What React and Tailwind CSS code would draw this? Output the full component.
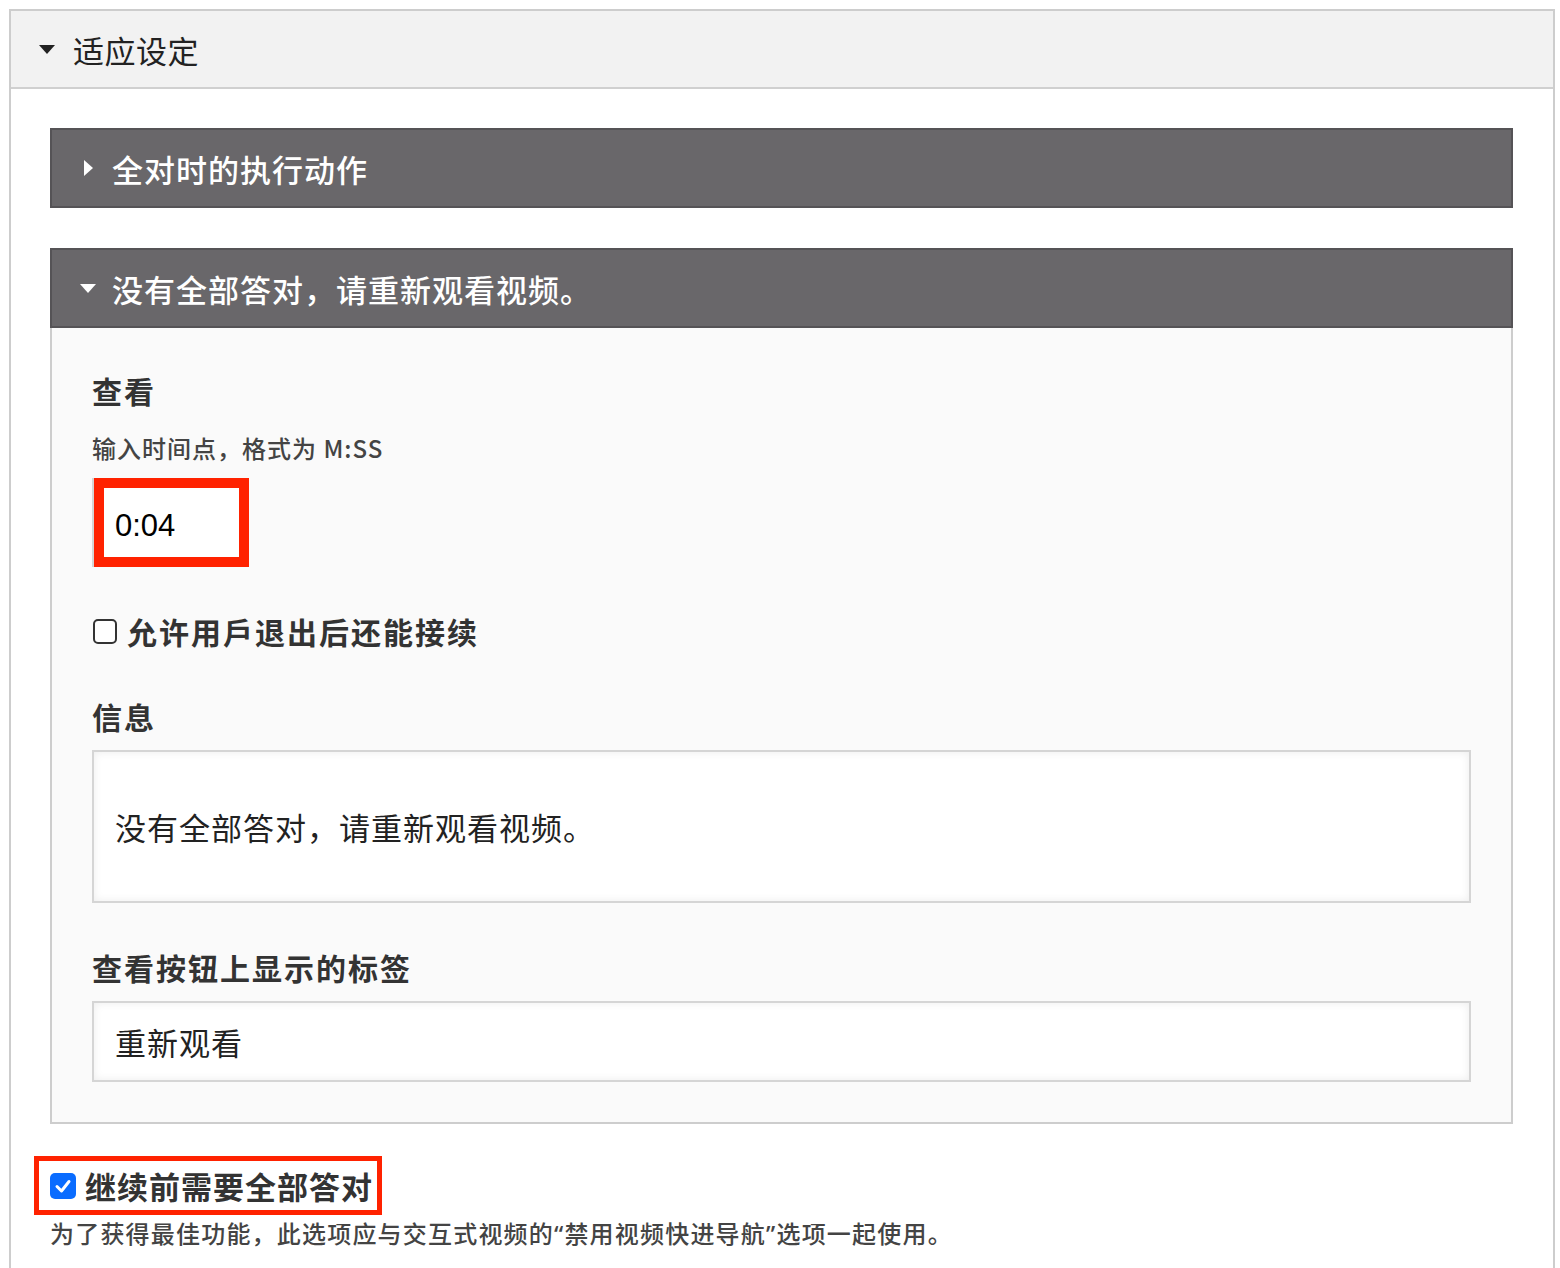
import React from 'react';

const cjk = { fontFamily: '"Noto Sans CJK SC", "Noto Sans", sans-serif' };

const Caret = ({ dir = 'down', color = '#222', className = '' }) =>
    dir === 'down' ? (
        <svg width="16" height="9" viewBox="0 0 16 9" className={className}>
            <polygon points="0,0 16,0 8,9" fill={color} />
        </svg>
    ) : (
        <svg width="9" height="16" viewBox="0 0 9 16" className={className}>
            <polygon points="0,0 9,8 0,16" fill={color} />
        </svg>
    );

const DarkHeader = ({ open, children }) => (
    <div className="flex items-center h-[80px] bg-[#69676a] border-2 border-[#555356] pl-[28px] gap-[16px]">
        {open ? (
            <Caret dir="down" color="#fff" />
        ) : (
            <Caret dir="right" color="#fff" className="ml-[4px] mr-[3px]" />
        )}
        <span className="text-[31px] font-medium text-white leading-none tracking-[1px]">{children}</span>
    </div>
);

const Label = ({ children, className = '' }) => (
    <div className={`text-[30px] font-bold text-[#333] leading-[40px] tracking-[2px] ${className}`}>{children}</div>
);

// narrow latin quotes, like the reference
const Q = ({ children }) => (
    <span style={{ fontFamily: '"Noto Sans", sans-serif' }}>{children}</span>
);

const App = () => {
    return (
        <div className="min-h-screen bg-white overflow-hidden" style={cjk}>
            <div className="ml-[9px] mt-[9px] w-[1546px] border-2 border-[#cdcdcd] border-b-0 pb-[80px]">
                {/* Section header */}
                <div className="flex items-center h-[78px] bg-[#f2f2f2] border-b-2 border-[#d0d0d0] pl-[28px] gap-[18px]">
                    <Caret dir="down" color="#222" />
                    <span className="text-[31px] text-[#222] leading-none tracking-[0.5px]">适应设定</span>
                </div>

                <div className="pl-[39px] pr-[40px] pt-[39px] flex flex-col">
                    <DarkHeader>全对时的执行动作</DarkHeader>

                    <div className="mt-[40px]">
                        <DarkHeader open>没有全部答对，请重新观看视频。</DarkHeader>

                        {/* Panel body */}
                        <div className="bg-[#fafafa] border-2 border-t-0 border-[#cdcdcd] pl-[40px] pr-[40px] pt-[42px] pb-[40px]">
                            <Label>查看</Label>
                            <div className="mt-[23px] text-[24px] font-medium text-[#444] leading-[30px] tracking-[1px]">
                                输入时间点，格式为 M:SS
                            </div>

                            <div className="mt-[15px] flex">
                                <div className="border-l-2 border-[#d5d5d5]">
                                    <div className="w-[155px] h-[89px] border-[10px] border-[#ff2200] bg-white flex items-center pl-[11px] pt-[8px]">
                                        <span className="text-[31px] text-black" style={{ fontFamily: '"Liberation Sans", Arial, sans-serif' }}>
                                            0:04
                                        </span>
                                    </div>
                                </div>
                            </div>

                            <div className="mt-[44px] flex items-center gap-[10px]">
                                <div className="w-[24px] h-[25px] border-2 border-[#333] rounded-[5px] bg-white ml-[1px]" />
                                <span className="text-[30px] font-bold text-[#333] leading-[40px] tracking-[2px]">允许用戶退出后还能接续</span>
                            </div>

                            <Label className="mt-[45px]">信息</Label>
                            <div className="mt-[14px] h-[153px] bg-white border-2 border-[#d5d5d5] shadow-[inset_0_0_8px_rgba(0,0,0,0.08)] flex items-center pl-[21px]">
                                <span className="text-[31px] text-[#222] leading-none tracking-[1px]">没有全部答对，请重新观看视频。</span>
                            </div>

                            <Label className="mt-[44px]">查看按钮上显示的标签</Label>
                            <div className="mt-[14px] h-[81px] bg-white border-2 border-[#d5d5d5] shadow-[inset_0_0_8px_rgba(0,0,0,0.08)] flex items-center pl-[21px]">
                                <span className="text-[31px] text-[#222] leading-none tracking-[1px]">重新观看</span>
                            </div>
                        </div>
                    </div>

                    {/* Require all answers */}
                    <div className="mt-[32px] -ml-[16px] self-start border-[5px] border-[#ff2200] h-[59px] flex items-center pl-[11px] pr-[4px] gap-[9px]">
                        <div className="w-[26px] h-[26px] rounded-[5px] bg-[#0a6cff] flex items-center justify-center">
                            <svg width="18" height="18" viewBox="0 0 18 18">
                                <polyline points="3,9.5 7.5,14 15,4.5" fill="none" stroke="#fff" strokeWidth="3" strokeLinecap="round" strokeLinejoin="round" />
                            </svg>
                        </div>
                        <span className="text-[31px] font-bold text-[#333] leading-none tracking-[1px]">继续前需要全部答对</span>
                    </div>
                    <div className="mt-[2px] text-[24px] font-medium text-[#444] leading-[32px] tracking-[1.2px]">
                        为了获得最佳功能，此选项应与交互式视频的<Q>“</Q>禁用视频快进导航<Q>”</Q>选项一起使用。
                    </div>
                </div>
            </div>
        </div>
    );
};

export default App;
